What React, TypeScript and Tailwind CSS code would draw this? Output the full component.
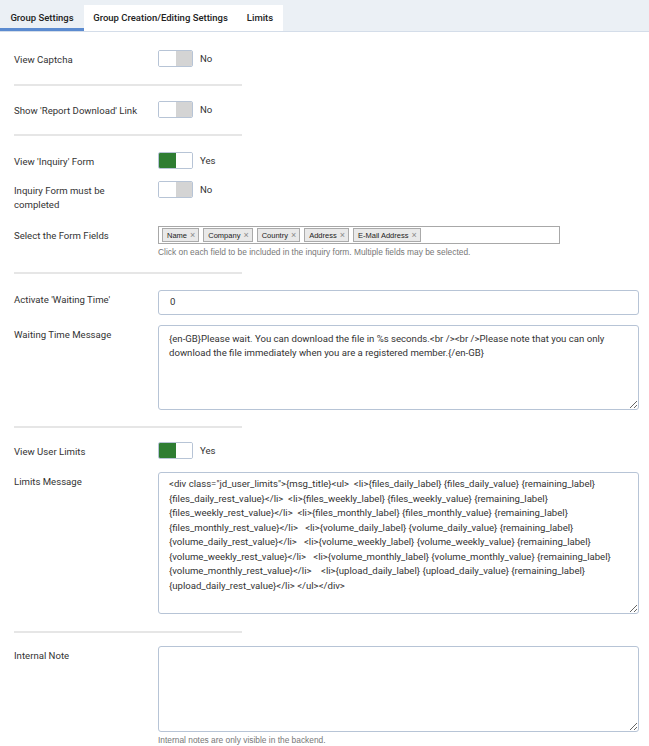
import React from 'react';

const limitsText = [
  '<div class="jd_user_limits">{msg_title}<ul>  <li>{files_daily_label} {files_daily_value} {remaining_label}',
  '{files_daily_rest_value}</li>  <li>{files_weekly_label} {files_weekly_value} {remaining_label}',
  '{files_weekly_rest_value}</li>  <li>{files_monthly_label} {files_monthly_value} {remaining_label}',
  '{files_monthly_rest_value}</li>   <li>{volume_daily_label} {volume_daily_value} {remaining_label}',
  '{volume_daily_rest_value}</li>   <li>{volume_weekly_label} {volume_weekly_value} {remaining_label}',
  '{volume_weekly_rest_value}</li>   <li>{volume_monthly_label} {volume_monthly_value} {remaining_label}',
  '{volume_monthly_rest_value}</li>    <li>{upload_daily_label} {upload_daily_value} {remaining_label}',
  '{upload_daily_rest_value}</li> </ul></div>',
].join('\n');

const waitingText =
  '{en-GB}Please wait. You can download the file in %s seconds.<br /><br />Please note that you can only download the file immediately when you are a registered member.{/en-GB}';

const formFields = ['Name', 'Company', 'Country', 'Address', 'E-Mail Address'];

const Toggle: React.FC<{ on: boolean }> = ({ on }) => (
  <div className="flex items-center gap-[7px]">
    <div className="w-[35px] h-[17px] flex border border-[#b7c4d6] rounded-[2px] overflow-hidden">
      <div className={on ? 'w-1/2 bg-[#2e7d32]' : 'w-1/2 bg-white'} />
      <div className={on ? 'w-1/2 bg-white' : 'w-1/2 bg-[#d4d4d4]'} />
    </div>
    <span className="text-[9.6px] leading-[14px] text-[#333]">{on ? 'Yes' : 'No'}</span>
  </div>
);

const Row: React.FC<{ label: React.ReactNode; className?: string; children: React.ReactNode }> = ({ label, className, children }) => (
  <div className={'flex items-start ' + (className || '')}>
    <div className="w-[144px] shrink-0 pt-[3px] pr-[8px] text-[9.6px] leading-[14px] text-[#333]">{label}</div>
    <div className="flex-1 min-w-0">{children}</div>
  </div>
);

const Separator: React.FC<{ className?: string }> = ({ className }) => (
  <div className={'w-[228px] h-[2px] bg-[#e6e6e6] ' + (className || '')} />
);

export default function App() {
  return (
    <div className="w-[649px] min-h-[746px] bg-white font-['Roboto',sans-serif] text-[#333]">
      {/* Tabs */}
      <div className="h-[32px] bg-[#ebf0f5] border-b border-[#d4dde9] flex items-end">
        <div className="h-[31px] w-[84px] pt-[8px] flex items-center justify-center border-b-[3px] border-[#5b8bd0] text-[9.5px] font-medium text-[#222]">
          Group Settings
        </div>
        <div className="h-[26px] w-[153px] bg-white flex items-center justify-center text-[9.5px] font-medium text-[#222]">
          Group Creation/Editing Settings
        </div>
        <div className="h-[26px] w-[46px] bg-white flex items-center justify-center text-[9.5px] font-medium text-[#222]">
          Limits
        </div>
      </div>

      <div className="px-[14px]">
        <Row label="View Captcha" className="mt-[18px]">
          <Toggle on={false} />
        </Row>
        <Separator className="mt-[17px]" />

        <Row label="Show 'Report Download' Link" className="mt-[15px]">
          <Toggle on={false} />
        </Row>
        <Separator className="mt-[16px]" />

        <Row label="View 'Inquiry' Form" className="mt-[16px]">
          <Toggle on={true} />
        </Row>
        <Row label={<>Inquiry Form must be<br />completed</>} className="mt-[12px]">
          <Toggle on={false} />
        </Row>
        <Row label="Select the Form Fields" className="mt-[14px]">
          <div className="w-[402px] h-[18px] border border-[#a8a8a8] flex items-center gap-[4px] px-[3px] font-['Liberation_Sans',Arial,sans-serif]">
            {formFields.map((f) => (
              <span
                key={f}
                className="h-[14px] flex items-center pl-[4px] pr-[3px] bg-[#e9e9e9] border border-[#aaa] text-[7.5px] leading-[11px] text-[#222]"
              >
                {f}
                <span className="ml-[3px] text-[9px] leading-[11px] text-[#888]">×</span>
              </span>
            ))}
          </div>
          <div className="mt-[3px] text-[8.4px] leading-[10px] text-[#777] font-['Liberation_Sans',Arial,sans-serif]">
            Click on each field to be included in the inquiry form. Multiple fields may be selected.
          </div>
        </Row>
        <Separator className="mt-[15px]" />

        <Row label="Activate 'Waiting Time'" className="mt-[16px]">
          <div className="w-[481px] h-[25px] border border-[#b7c4d6] rounded-[3px] flex items-center pl-[11px] text-[9.6px] text-[#333]">
            0
          </div>
        </Row>
        <Row label="Waiting Time Message" className="mt-[10px]">
          <textarea
            readOnly
            defaultValue={waitingText}
            className="block w-[481px] h-[85px] border border-[#b7c4d6] rounded-[3px] pl-[10px] pr-[8px] pt-[6px] text-[9.6px] leading-[14.4px] text-[#333] font-['Roboto',sans-serif] outline-none"
          />
        </Row>
        <Separator className="mt-[16px]" />

        <Row label="View User Limits" className="mt-[14px]">
          <Toggle on={true} />
        </Row>
        <Row label="Limits Message" className="mt-[13px]">
          <textarea
            readOnly
            defaultValue={limitsText}
            className="block w-[481px] h-[142px] border border-[#b7c4d6] rounded-[3px] pl-[10px] pr-[8px] pt-[4px] text-[9.6px] leading-[14.5px] text-[#333] font-['Roboto',sans-serif] outline-none"
          />
        </Row>
        <Separator className="mt-[17px]" />

        <Row label="Internal Note" className="mt-[13px]">
          <textarea
            readOnly
            defaultValue=""
            className="block w-[481px] h-[86px] border border-[#b7c4d6] rounded-[3px] px-[10px] pt-[6px] text-[9.6px] text-[#333] outline-none"
          />
          <div className="mt-[3px] text-[8.4px] leading-[10px] text-[#777] font-['Liberation_Sans',Arial,sans-serif]">
            Internal notes are only visible in the backend.
          </div>
        </Row>
      </div>
    </div>
  );
}
